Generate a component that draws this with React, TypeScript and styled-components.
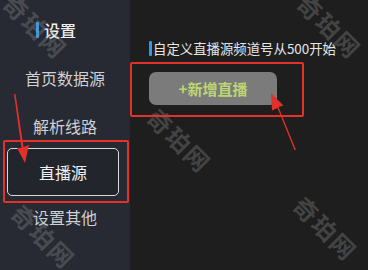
import React from 'react';
import styled, { createGlobalStyle } from 'styled-components';

const GlobalStyle = createGlobalStyle`
  html, body {
    margin: 0;
    padding: 0;
    background: #1e1e1e;
  }
  body {
    font-family: "Noto Sans CJK SC", "Noto Sans", sans-serif;
  }
`;

const Screen = styled.div`
  position: relative;
  width: 368px;
  height: 270px;
  display: flex;
  overflow: hidden;
`;

const Sidebar = styled.nav`
  width: 130px;
  flex-shrink: 0;
  background: #272a32;
  display: flex;
  flex-direction: column;
  padding-top: 20px;
  box-sizing: border-box;
`;

const Heading = styled.div`
  display: flex;
  align-items: center;
  gap: 5px;
  height: 20px;
  margin: 0 0 14px 36px;
  font-size: 16px;
  font-weight: 500;
  color: #f0f0f0;
  line-height: 20px;
`;

const Marker = styled.span<{ $h: number }>`
  width: 3px;
  height: ${p => p.$h}px;
  border-radius: 1px;
  background: #2f9ae6;
`;

const NavItem = styled.div<{ $active?: boolean }>`
  height: 48px;
  display: flex;
  align-items: center;
  justify-content: center;
  font-size: 16px;
  color: ${p => (p.$active ? '#f2f2f2' : '#cfd0d3')};
  box-sizing: border-box;
  ${p =>
    p.$active &&
    `
    margin: -2px 11px -3px 7px;
    border: 1.5px solid #d9d9dc;
    border-radius: 5px;
    background: #22252c;
  `}
`;

const Content = styled.main`
  flex: 1;
  background: #1e1e1e;
  padding: 40px 0 0 19px;
  box-sizing: border-box;
`;

const Hint = styled.div`
  display: flex;
  align-items: center;
  gap: 1px;
  font-size: 13.4px;
  line-height: 16px;
  color: #e6e6e6;
  margin-bottom: 16px;
`;

const AddButton = styled.button`
  width: 128px;
  height: 33px;
  border: none;
  border-radius: 7px;
  background: #7b7b7b;
  color: #bcd672;
  font-family: inherit;
  font-size: 15px;
  font-weight: 700;
  padding: 0;
  cursor: pointer;
`;

const Callout = styled.div<{ $x: number; $y: number; $w: number; $h: number }>`
  position: absolute;
  left: ${p => p.$x}px;
  top: ${p => p.$y}px;
  width: ${p => p.$w}px;
  height: ${p => p.$h}px;
  border: 2.5px solid #e2322b;
  border-radius: 2px;
  box-sizing: border-box;
  pointer-events: none;
`;

const Overlay = styled.svg`
  position: absolute;
  left: 0;
  top: 0;
  pointer-events: none;
`;

const Watermark = styled.div<{ $x: number; $y: number }>`
  position: absolute;
  left: ${p => p.$x}px;
  top: ${p => p.$y}px;
  transform: translate(-50%, -50%) rotate(45deg);
  font-size: 24px;
  font-weight: 700;
  letter-spacing: 2px;
  color: rgba(150, 150, 150, 0.32);
  white-space: nowrap;
  pointer-events: none;
`;

const marks = [
  { x: 36, y: 26 },
  { x: 330, y: 26 },
  { x: 180, y: 140 },
  { x: 44, y: 236 },
  { x: 326, y: 228 },
];

const navItems = ['首页数据源', '解析线路', '直播源', '设置其他'];

const App: React.FC = () => {
  return (
    <>
      <GlobalStyle />
      <Screen>
        <Sidebar>
          <Heading>
            <Marker $h={16} />
            设置
          </Heading>
          {navItems.map(item => (
            <NavItem key={item} $active={item === '直播源'}>
              {item}
            </NavItem>
          ))}
        </Sidebar>

        <Content>
          <Hint>
            <Marker $h={15} />
            自定义直播源频道号从500开始
          </Hint>
          <AddButton>+新增直播</AddButton>
        </Content>

        {marks.map((m, i) => (
          <Watermark key={i} $x={m.x} $y={m.y}>
            奇珀网
          </Watermark>
        ))}

        <Callout $x={3} $y={140} $w={126} $h={63} />
        <Callout $x={130} $y={62} $w={174} $h={55} />

        <Overlay width="368" height="270" viewBox="0 0 368 270">
          <polygon points="14,94 15.5,94 23.5,147 29,145 25,163 17,148 21.5,148" fill="#e3302a" />
          <polygon points="296,150 294.5,150 277.5,108 272,110.5 271,93 283.5,105.5 278.5,107" fill="#e3302a" />
        </Overlay>
      </Screen>
    </>
  );
};

export default App;
